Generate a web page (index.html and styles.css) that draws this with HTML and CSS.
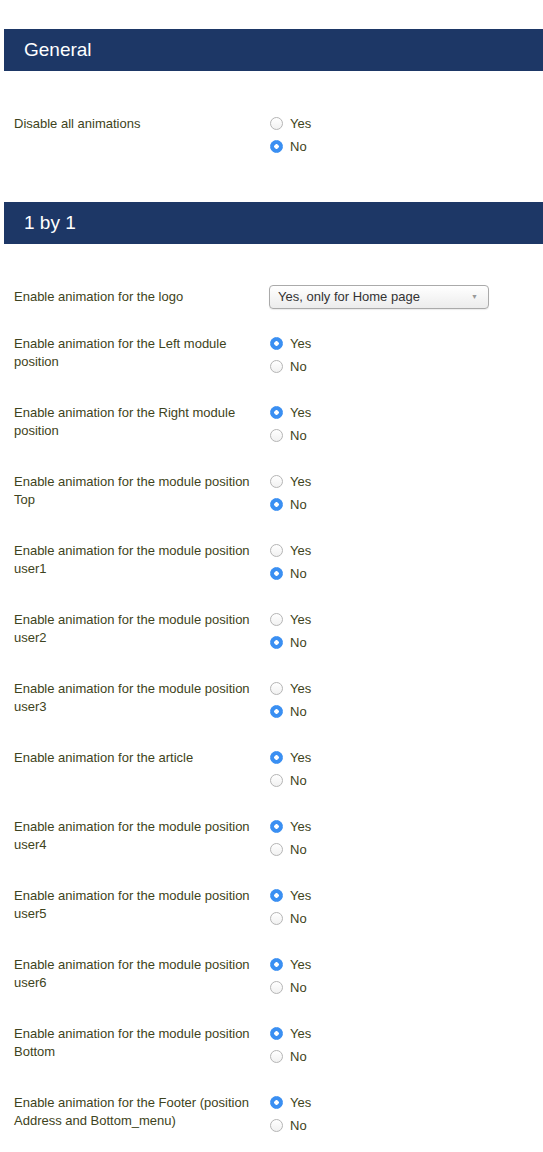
FILE: index.html
```html
<!DOCTYPE html>
<html lang="en">
<head>
  <meta charset="UTF-8" />
  <meta name="viewport" content="width=device-width, initial-scale=1.0" />
  <title>Animation Settings</title>
  <link rel="stylesheet" href="styles.css">
</head>
<body>
  <section class="panel">
    <h2 class="panel-title">General</h2>
    <div class="fields">
      <div class="row">
        <label class="label">Disable all animations</label>
        <div class="radios">
          <label class="opt"><input type="radio" name="disable"> Yes</label>
          <label class="opt"><input type="radio" name="disable" checked> No</label>
        </div>
      </div>
    </div>
  </section>

  <section class="panel">
    <h2 class="panel-title">1 by 1</h2>
    <div class="fields">
      <div class="row">
        <label class="label">Enable animation for the logo</label>
        <div>
          <div class="select">Yes, only for Home page <span class="caret">&#9660;</span></div>
        </div>
      </div>

      <div class="row">
        <label class="label">Enable animation for the Left module position</label>
        <div class="radios">
          <label class="opt"><input type="radio" name="left" checked> Yes</label>
          <label class="opt"><input type="radio" name="left"> No</label>
        </div>
      </div>

      <div class="row">
        <label class="label">Enable animation for the Right module position</label>
        <div class="radios">
          <label class="opt"><input type="radio" name="right" checked> Yes</label>
          <label class="opt"><input type="radio" name="right"> No</label>
        </div>
      </div>

      <div class="row">
        <label class="label">Enable animation for the module position Top</label>
        <div class="radios">
          <label class="opt"><input type="radio" name="top"> Yes</label>
          <label class="opt"><input type="radio" name="top" checked> No</label>
        </div>
      </div>

      <div class="row">
        <label class="label">Enable animation for the module position user1</label>
        <div class="radios">
          <label class="opt"><input type="radio" name="user1"> Yes</label>
          <label class="opt"><input type="radio" name="user1" checked> No</label>
        </div>
      </div>

      <div class="row">
        <label class="label">Enable animation for the module position user2</label>
        <div class="radios">
          <label class="opt"><input type="radio" name="user2"> Yes</label>
          <label class="opt"><input type="radio" name="user2" checked> No</label>
        </div>
      </div>

      <div class="row">
        <label class="label">Enable animation for the module position user3</label>
        <div class="radios">
          <label class="opt"><input type="radio" name="user3"> Yes</label>
          <label class="opt"><input type="radio" name="user3" checked> No</label>
        </div>
      </div>

      <div class="row">
        <label class="label">Enable animation for the article</label>
        <div class="radios">
          <label class="opt"><input type="radio" name="article" checked> Yes</label>
          <label class="opt"><input type="radio" name="article"> No</label>
        </div>
      </div>

      <div class="row">
        <label class="label">Enable animation for the module position user4</label>
        <div class="radios">
          <label class="opt"><input type="radio" name="user4" checked> Yes</label>
          <label class="opt"><input type="radio" name="user4"> No</label>
        </div>
      </div>

      <div class="row">
        <label class="label">Enable animation for the module position user5</label>
        <div class="radios">
          <label class="opt"><input type="radio" name="user5" checked> Yes</label>
          <label class="opt"><input type="radio" name="user5"> No</label>
        </div>
      </div>

      <div class="row">
        <label class="label">Enable animation for the module position user6</label>
        <div class="radios">
          <label class="opt"><input type="radio" name="user6" checked> Yes</label>
          <label class="opt"><input type="radio" name="user6"> No</label>
        </div>
      </div>

      <div class="row">
        <label class="label">Enable animation for the module position Bottom</label>
        <div class="radios">
          <label class="opt"><input type="radio" name="bottom" checked> Yes</label>
          <label class="opt"><input type="radio" name="bottom"> No</label>
        </div>
      </div>

      <div class="row">
        <label class="label">Enable animation for the Footer (position Address and Bottom_menu)</label>
        <div class="radios">
          <label class="opt"><input type="radio" name="footer" checked> Yes</label>
          <label class="opt"><input type="radio" name="footer"> No</label>
        </div>
      </div>
    </div>
  </section>
</body>
</html>
```

FILE: styles.css
```css
body {
  margin: 0;
  padding-top: 29px;
  font-family: "Liberation Sans", Arial, sans-serif;
  font-size: 13px;
  color: #3e4320;
  background: #fff;
}
.panel {
  margin-bottom: 44px;
}
.panel-title {
  margin: 0 0 0 4px;
  height: 42px;
  line-height: 42px;
  padding-left: 20px;
  background: #1d3766;
  color: #fff;
  font-size: 19px;
  font-weight: normal;
}
.fields {
  display: flex;
  flex-direction: column;
  gap: 23px;
  padding: 41px 0 0 14px;
}
.row {
  display: grid;
  grid-template-columns: 244px 1fr;
  column-gap: 11px;
}
.label {
  line-height: 18px;
  padding-top: 3px;
}
.radios {
  display: flex;
  flex-direction: column;
}
.opt {
  display: flex;
  align-items: center;
  height: 23px;
}
.opt input {
  appearance: none;
  -webkit-appearance: none;
  width: 13px;
  height: 13px;
  margin: 0 7px 0 1px;
  border: 1px solid #b5b5b5;
  border-radius: 50%;
  background: linear-gradient(#fff, #f1f1f1);
}
.opt input:checked {
  border-color: #3a8ff2;
  background: radial-gradient(circle, #fff 0 2px, #3a8ff2 2.5px);
}
.select {
  position: relative;
  width: 210px;
  height: 22px;
  line-height: 22px;
  padding-left: 8px;
  border: 1px solid #aaa;
  border-radius: 4px;
  background: linear-gradient(#fff, #ececec);
  box-shadow: 0 1px 1px rgba(0, 0, 0, 0.08);
  color: #333;
}
.caret {
  position: absolute;
  right: 10px;
  top: 0;
  font-size: 7px;
  color: #999;
}
```
